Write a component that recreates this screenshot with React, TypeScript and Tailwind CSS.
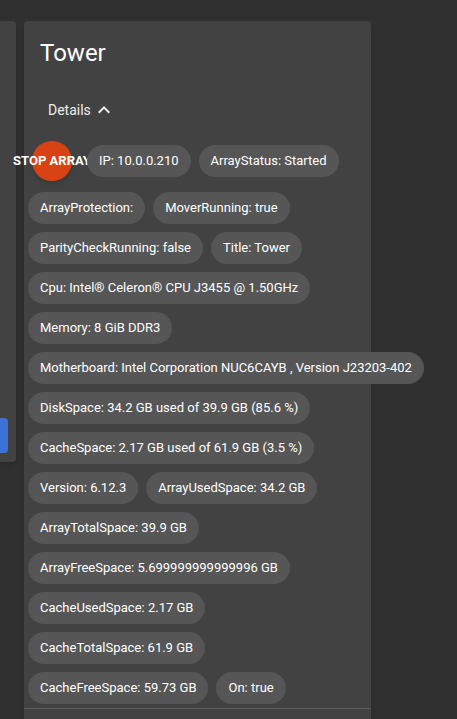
import React from 'react';

const ITEMS = [
  'IP: 10.0.0.210',
  'ArrayStatus: Started',
  'ArrayProtection:',
  'MoverRunning: true',
  'ParityCheckRunning: false',
  'Title: Tower',
  'Cpu: Intel® Celeron® CPU J3455 @ 1.50GHz',
  'Memory: 8 GiB DDR3',
  'Motherboard: Intel Corporation NUC6CAYB , Version J23203-402',
  'DiskSpace: 34.2 GB used of 39.9 GB (85.6 %)',
  'CacheSpace: 2.17 GB used of 61.9 GB (3.5 %)',
  'Version: 6.12.3',
  'ArrayUsedSpace: 34.2 GB',
  'ArrayTotalSpace: 39.9 GB',
  'ArrayFreeSpace: 5.699999999999996 GB',
  'CacheUsedSpace: 2.17 GB',
  'CacheTotalSpace: 61.9 GB',
  'CacheFreeSpace: 59.73 GB',
  'On: true',
];

function ExpandLess() {
  return (
    <svg width="24" height="24" viewBox="0 0 24 24" fill="currentColor">
      <path d="M12 8l-6 6 1.41 1.41L12 10.83l4.59 4.58L18 14z" />
    </svg>
  );
}

export default function App() {
  return (
    <div className="min-h-screen h-[719px] overflow-hidden bg-[#303030] font-['Roboto',sans-serif] text-white">
      <div className="flex items-start gap-2 pt-[21px]">
        {/* neighbouring card, mostly off screen */}
        <div className="flex h-[441px] w-4 shrink-0 flex-col justify-end rounded-r bg-[#424242] pb-[9px] shadow-md">
          <div className="h-[35px] w-2 rounded-r bg-[#3a72d6]" />
        </div>

        <div className="w-[347px] shrink-0 rounded bg-[#424242] shadow-md">
          <h2 className="px-4 pt-4 text-2xl leading-8">Tower</h2>

          <div className="mt-[23px] ml-4 flex h-9 w-fit items-center px-2 text-sm text-[#ececec]">
            Details
            <span className="ml-px flex">
              <ExpandLess />
            </span>
          </div>

          <div className="mt-[6px] flex flex-wrap items-center">
            <button className="relative my-[7px] ml-2 mr-[11px] flex h-10 w-10 shrink-0 items-center justify-center rounded-full bg-[#d84315] text-[13px] font-bold shadow-md">
              <span className="whitespace-nowrap">STOP ARRAY</span>
            </button>
            {ITEMS.map(item => (
              <div
                key={item}
                className="relative m-1 flex h-8 shrink-0 items-center whitespace-nowrap rounded-full bg-[#565656] px-3 text-[13px]"
              >
                {item}
              </div>
            ))}
          </div>

          <div className="h-12 border-t border-[#5c5c5c]" />
        </div>
      </div>
    </div>
  );
}
